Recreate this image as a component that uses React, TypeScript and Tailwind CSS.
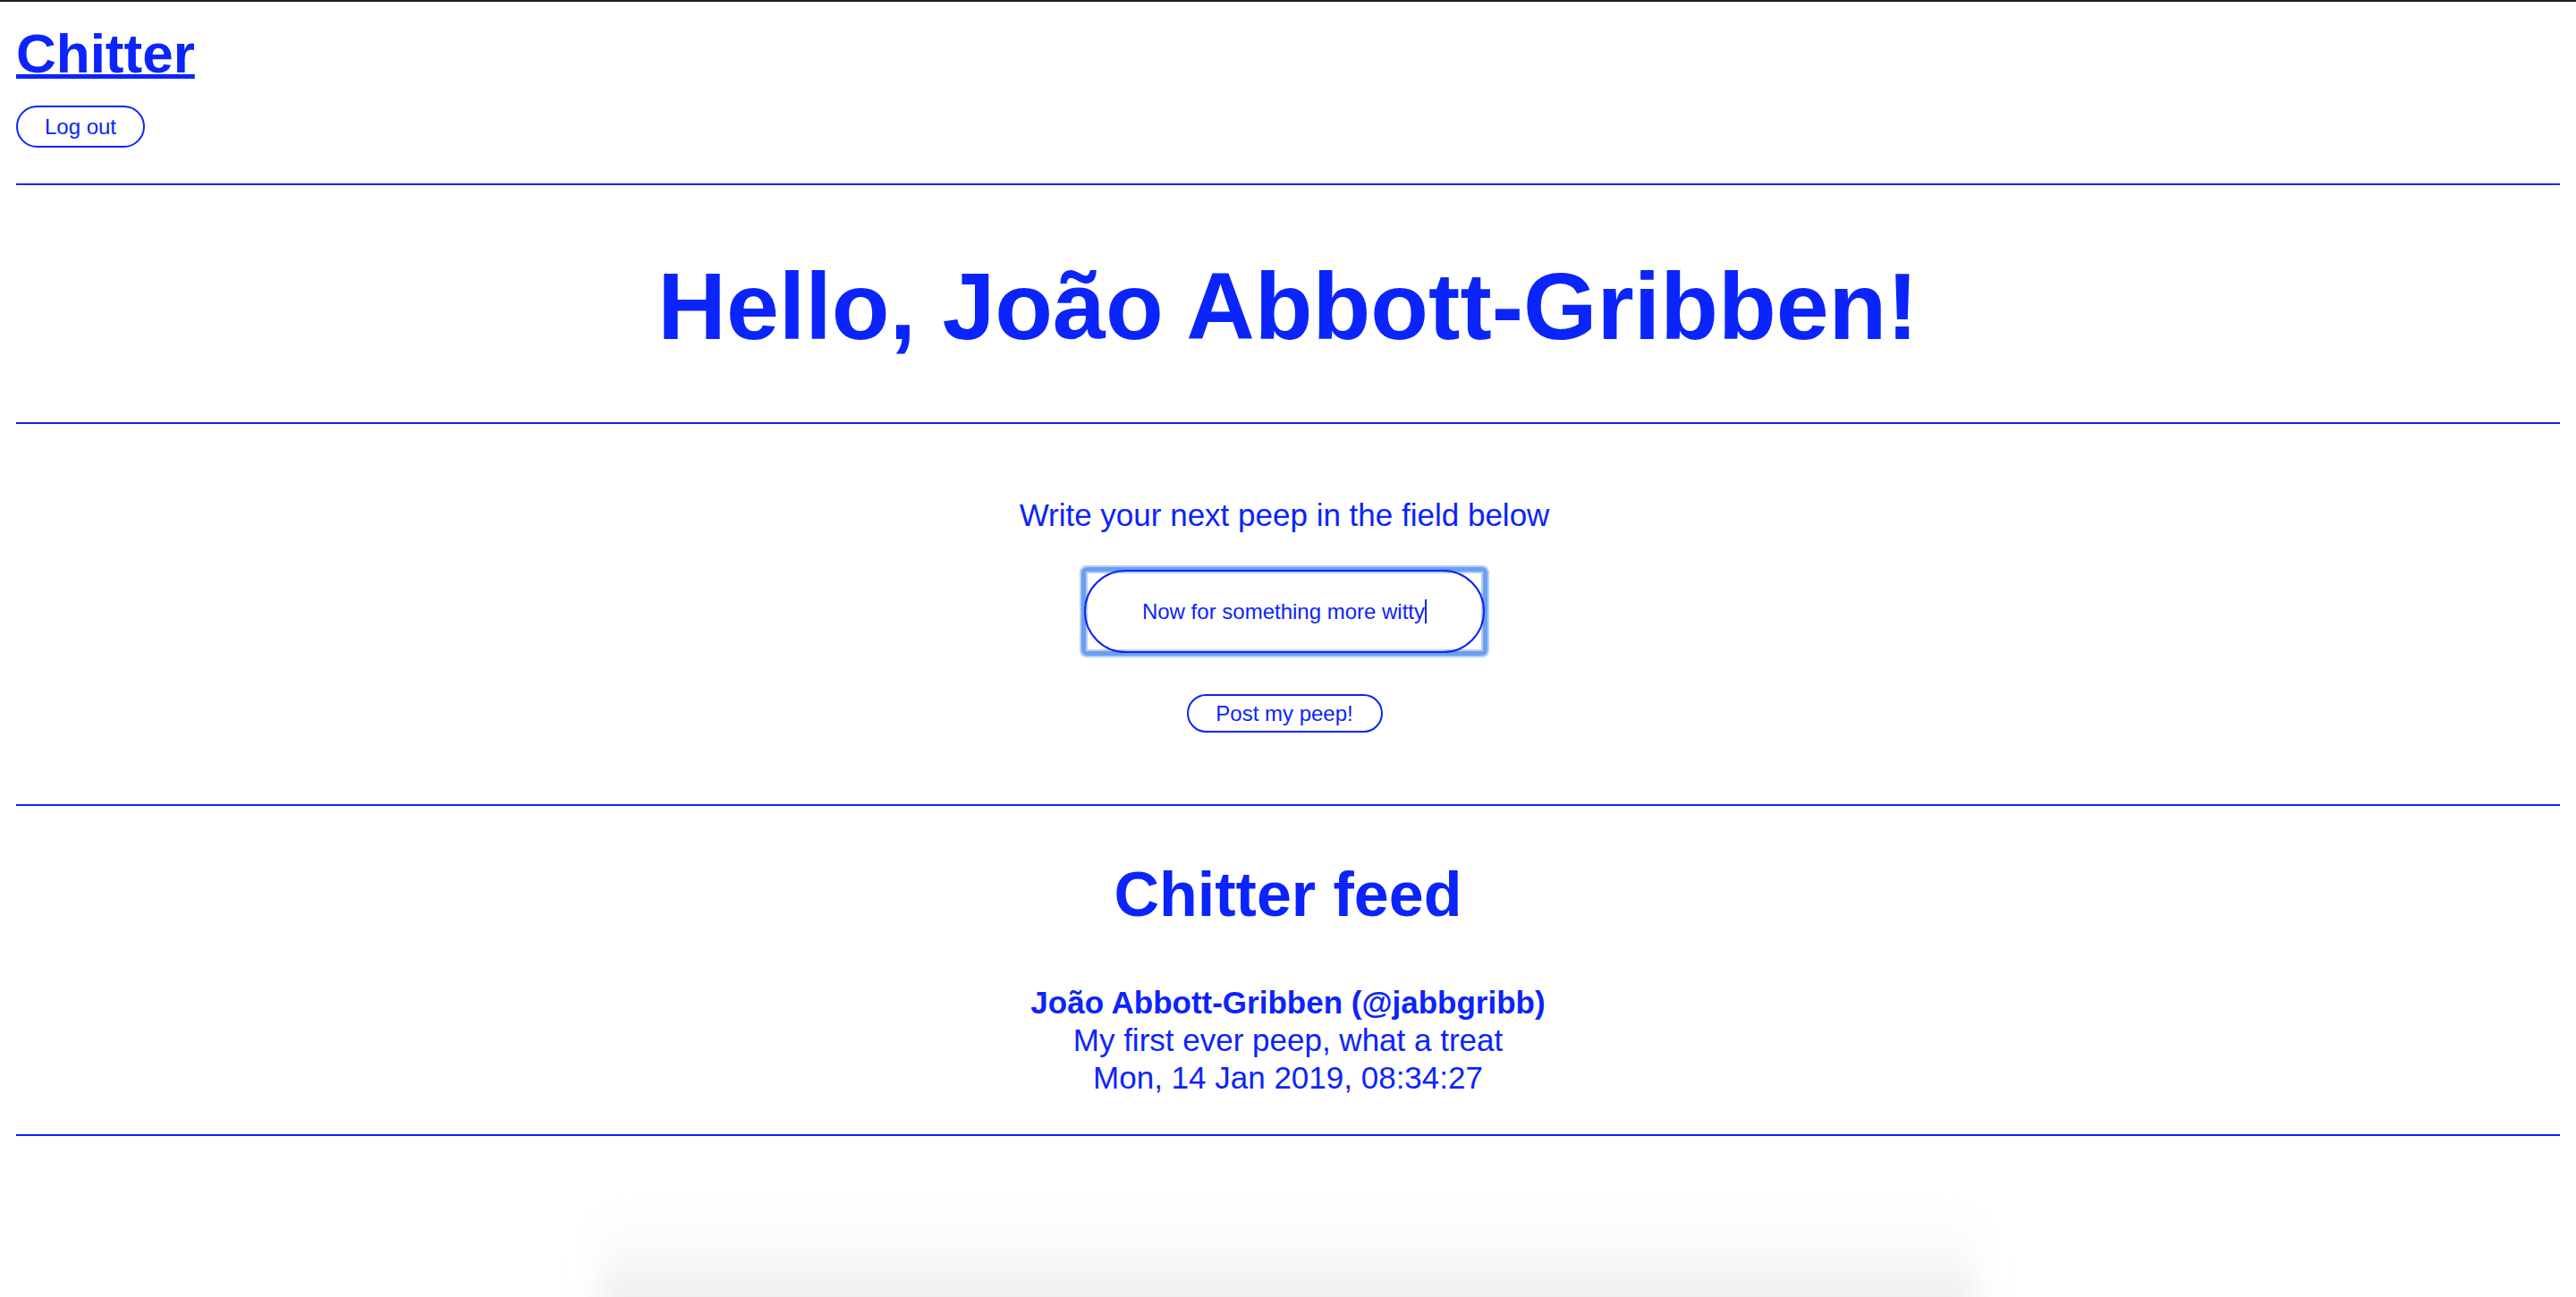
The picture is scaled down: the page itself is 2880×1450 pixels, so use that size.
export default function App() {
  return (
    <div className="min-h-[1450px] flex flex-col bg-white font-['Liberation_Sans',Arial,sans-serif] text-[#0b24fb] overflow-hidden">
      <div className="h-[2px] bg-[#1f1f1f]" />

      <div className="px-[18px]">
        <header className="pt-[22px]">
          <h1 className="text-[62px] leading-[72px] font-bold">
            <a href="#" className="underline decoration-[5px] underline-offset-[2px]">Chitter</a>
          </h1>
          <button className="mt-[22px] block w-[144px] h-[47px] rounded-full border-2 border-[#0b24fb] bg-white text-[24px] text-[#0b24fb]">
            Log out
          </button>
        </header>

        <hr className="mt-[40px] border-t-2 border-[#0b24fb]" />

        <h1 className="mt-[75px] text-center text-[106px] leading-[120px] font-bold">Hello, João Abbott-Gribben!</h1>

        <hr className="mt-[70px] border-t-2 border-[#0b24fb]" />

        <form className="flex flex-col items-center pr-[8px]" onSubmit={e => e.preventDefault()}>
          <p className="mt-[81px] text-[35px] leading-[42px]">Write your next peep in the field below</p>
          <div className="relative mt-[40px] w-[448px] h-[93px]">
            {/* focus ring, square-ish like the old webkit outline */}
            <div className="absolute -inset-[3px] rounded-[6px] border-[5px] border-[#6c9ef2] shadow-[0_0_0_2px_#b2cefa,inset_0_0_0_2px_#b2cefa] pointer-events-none" />
            <div
              role="textbox"
              className="relative h-full flex items-center justify-center rounded-full border-2 border-[#0b24fb] text-[24px]"
            >
              <span>Now for something more witty</span>
              <span className="w-[2px] h-[27px] bg-[#1a2bd0]" />
            </div>
          </div>
          <button type="submit" className="mt-[46px] w-[219px] h-[43px] rounded-full border-2 border-[#0b24fb] bg-white text-[24px] text-[#0b24fb]">
            Post my peep!
          </button>
        </form>

        <hr className="mt-[80px] border-t-2 border-[#0b24fb]" />

        <h2 className="mt-[57px] text-center text-[70px] leading-[84px] font-bold">Chitter feed</h2>

        <div className="mt-[58px] text-center text-[35px] leading-[42px]">
          <div className="font-bold">João Abbott-Gribben (@jabbgribb)</div>
          <div>My first ever peep, what a treat</div>
          <div>Mon, 14 Jan 2019, 08:34:27</div>
        </div>

        <hr className="mt-[42px] border-t-2 border-[#0b24fb]" />
      </div>

      <div className="flex-1" />
      <div className="mx-auto -mb-[24px] w-[1540px] h-[124px] bg-linear-to-b from-white via-[#f8f8f8] to-[#e9e9e9] blur-[16px]" />
    </div>
  )
}
